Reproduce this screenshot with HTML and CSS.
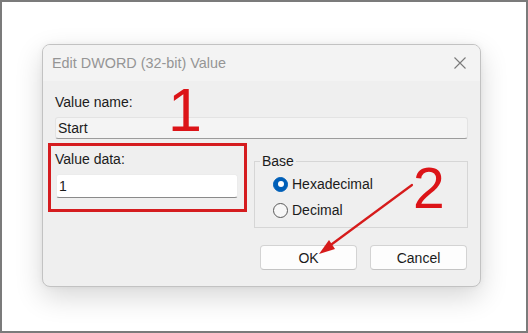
FILE: index.html
```html
<!DOCTYPE html>
<html>
<head>
    <meta charset="utf-8">
    <title>Edit DWORD (32-bit) Value</title>
    <link rel="stylesheet" href="styles.css">
</head>
<body>
<div class="screen">
    <div class="dialog">
        <div class="titlebar">
            <span class="title">Edit DWORD (32-bit) Value</span>
            <svg class="close" width="12" height="12" viewBox="0 0 12 12"><path d="M0.5 0.5L11.5 11.5M11.5 0.5L0.5 11.5" stroke="#7a7a7a" stroke-width="1.1" fill="none"/></svg>
        </div>
        <div class="body">
            <div class="label">Value name:</div>
            <div class="field readonly">Start</div>
            <div class="row">
                <div class="callout">
                    <div class="label">Value data:</div>
                    <div class="field input">1</div>
                </div>
                <fieldset class="group">
                    <legend>Base</legend>
                    <div class="radio"><span class="dot on"></span>Hexadecimal</div>
                    <div class="radio"><span class="dot"></span>Decimal</div>
                </fieldset>
            </div>
            <div class="buttons">
                <button class="btn">OK</button>
                <button class="btn">Cancel</button>
            </div>
        </div>
    </div>

    <span class="step one">1</span>
    <span class="step two">2</span>
    <svg class="arrow" width="528" height="333" viewBox="0 0 528 333">
        <line x1="412" y1="185" x2="328" y2="247" stroke="#d61b1b" stroke-width="2.2" stroke-linecap="round"/>
        <polygon points="319,254 335,249 329,240" fill="#d61b1b"/>
    </svg>
</div>
</body>
</html>
```

FILE: styles.css
```css
* { box-sizing: border-box; }
html, body { margin: 0; padding: 0; }
body { font-family: "Liberation Sans", Arial, sans-serif; font-size: 14px; color: #1b1b1b; }

.screen { position: relative; width: 528px; height: 333px; border: 2px solid #7b7b7b; background: #fff; padding: 42px 0 0 40px; }

.dialog { width: 439px; height: 243px; border: 1px solid #c2c2c2; border-radius: 8px; background: #efefef; box-shadow: 0 10px 28px rgba(0,0,0,0.16), 0 0 6px rgba(0,0,0,0.05); overflow: hidden; }

.titlebar { height: 36px; background: #f3f3f3; display: flex; align-items: center; justify-content: space-between; padding: 0 14px 1px 9px; }
.title { font-size: 14.4px; color: #959595; }
.close { display: block; }

.body { padding: 13px 12px 0 12px; }
.label { line-height: 16px; height: 16px; }

.field { height: 22px; line-height: 20px; padding-left: 2px; border-radius: 3px; }
.readonly { margin-top: 7px; background: #f4f4f4; border: 1px solid #e3e3e3; border-bottom-color: #9c9c9c; }
.input { margin: 7px 0 0 1px; width: 182px; height: 24px; line-height: 22px; background: #fff; border: 1px solid #ececec; border-bottom-color: #8a8a8a; }

.row { display: flex; align-items: flex-start; gap: 7px; margin-top: 4px; }
.callout { width: 199px; margin-left: -7px; border: 3px solid #d51c1f; padding: 5px 6px 11px 4px; }

.group { flex: 1; margin: 10px 0 0 0; padding: 5px 0 7px 18px; border: 1px solid #d6d6d6; min-width: 0; }
.group legend { padding: 0 2px; margin-left: -13px; line-height: 16px; }
.radio { display: flex; align-items: center; gap: 4px; height: 20px; }
.radio + .radio { margin-top: 6px; }
.dot { width: 15px; height: 15px; border-radius: 50%; border: 1px solid #5a5a5a; background: #f7f7f7; display: flex; align-items: center; justify-content: center; }
.dot.on { border-color: #005fb8; background: #005fb8; }
.dot.on::after { content: ""; width: 6px; height: 6px; border-radius: 50%; background: #fff; }

.buttons { display: flex; justify-content: flex-end; gap: 13px; margin: 17px 1px 0 0; }
.btn { width: 97px; height: 25px; font-family: inherit; font-size: 14px; color: #1b1b1b; background: #fdfdfd; border: 1px solid #d3d3d3; border-bottom-color: #c4c4c4; border-radius: 4px; padding: 0; }

.step { position: absolute; font-family: "Liberation Sans", Arial, sans-serif; line-height: 1; color: #dc1418; }
.one { left: 166px; top: 78px; font-size: 61px; }
.two { left: 411px; top: 158px; font-size: 57px; }
.arrow { position: absolute; left: -2px; top: -2px; pointer-events: none; }
```
